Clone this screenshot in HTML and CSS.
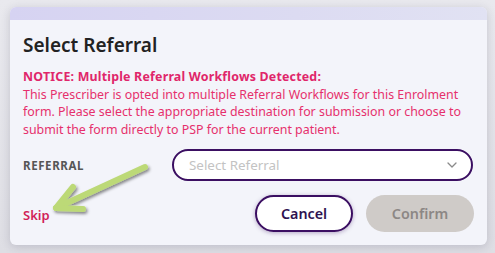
FILE: index.html
```html
<!DOCTYPE html>
<html lang="en">
<head>
<meta charset="utf-8">
<title>Select Referral</title>
<link rel="stylesheet" href="styles.css">
</head>
<body>
<div class="page">
  <div class="card">
    <div class="band"></div>
    <div class="content">
      <h1 class="title">Select Referral</h1>
      <div class="notice">
        <strong>NOTICE: Multiple Referral Workflows Detected:</strong><br>
        This Prescriber is opted into multiple Referral Workflows for this Enrolment form. Please select the appropriate destination for submission or choose to submit the form directly to PSP for the current patient.
      </div>
      <div class="field-row">
        <label class="label">REFERRAL</label>
        <div class="select">
          <span class="placeholder">Select Referral</span>
          <svg class="chevron" width="10" height="6" viewBox="0 0 10 6"><path d="M1 1l4 4 4-4" fill="none" stroke="#8a8a8a" stroke-width="1.3" stroke-linecap="round" stroke-linejoin="round"/></svg>
        </div>
      </div>
      <div class="actions">
        <a class="skip">Skip</a>
        <div class="buttons">
          <button class="btn btn-cancel">Cancel</button>
          <button class="btn btn-confirm">Confirm</button>
        </div>
      </div>
    </div>
    <svg class="arrow" width="477" height="238" viewBox="0 0 477 238">
      <defs>
        <filter id="sh" x="-20%" y="-20%" width="140%" height="140%">
          <feDropShadow dx="1.5" dy="2" stdDeviation="1.4" flood-color="#000" flood-opacity="0.45"/>
        </filter>
      </defs>
      <g filter="url(#sh)" stroke="#bcd977" stroke-width="6" stroke-linecap="round" stroke-linejoin="round" fill="none">
        <path d="M135 160 L46 201"/>
        <path d="M63 180 L46 201 L73 202"/>
      </g>
    </svg>
  </div>
</div>
</body>
</html>
```
FILE: styles.css
```css
html, body {
  margin: 0;
  padding: 0;
}
body {
  width: 495px;
  height: 253px;
  background: linear-gradient(180deg, #e9e9ee 0%, #dedee4 100%);
  font-family: "Noto Sans", "Open Sans", sans-serif;
  overflow: hidden;
}
.page {
  padding: 7px 8px 0 10px;
}
.card {
  position: relative;
  height: 238px;
  background: #f3f4fa;
  border-radius: 6px;
  box-shadow: 0 2px 10px rgba(40, 40, 70, 0.18);
  overflow: hidden;
}
.band {
  height: 13px;
  background: linear-gradient(90deg, #d6d3f2 0%, #dcdbf2 60%, #e1e2f3 100%);
}
.content {
  padding: 0 14px 0 13px;
}
.title {
  margin: 13px 0 0;
  font-size: 19px;
  line-height: 24px;
  font-weight: 600;
  color: #222;
}
.notice {
  margin-top: 11px;
  font-size: 12.4px;
  line-height: 17.6px;
  color: #e6306c;
}
.notice strong {
  font-weight: 700;
  letter-spacing: 0.2px;
  color: #e0266a;
}
.field-row {
  display: flex;
  align-items: center;
  margin-top: 11px;
}
.label {
  width: 149px;
  flex: none;
  font-size: 11.5px;
  font-weight: 700;
  letter-spacing: 0.6px;
  color: #565656;
}
.select {
  flex: 1;
  height: 28px;
  border: 2px solid #3b0f62;
  border-radius: 16px;
  background: #fff;
  display: flex;
  align-items: center;
  justify-content: space-between;
  padding: 0 14px 0 15px;
}
.placeholder {
  font-size: 13.4px;
  color: #c3c3c3;
}
.chevron {
  display: block;
}
.actions {
  display: flex;
  justify-content: space-between;
  align-items: center;
  margin-top: 14px;
}
.skip {
  font-size: 13px;
  font-weight: 600;
  color: #d11f57;
  margin-top: 3px;
}
.buttons {
  display: flex;
  gap: 13px;
}
.btn {
  font-family: "Noto Sans", "Open Sans", sans-serif;
  font-size: 14.3px;
  font-weight: 600;
  height: 37px;
  border-radius: 19px;
  padding: 0;
}
.btn-cancel {
  width: 98px;
  background: #fff;
  border: 2px solid #3b0f62;
  color: #2e1250;
  box-shadow: 0 1px 4px rgba(60, 20, 100, 0.35);
}
.btn-confirm {
  width: 108px;
  margin-right: -1px;
  background: #cfcbc8;
  border: none;
  color: #8c8785;
}
.arrow {
  position: absolute;
  left: 0;
  top: 0;
  pointer-events: none;
}
```
